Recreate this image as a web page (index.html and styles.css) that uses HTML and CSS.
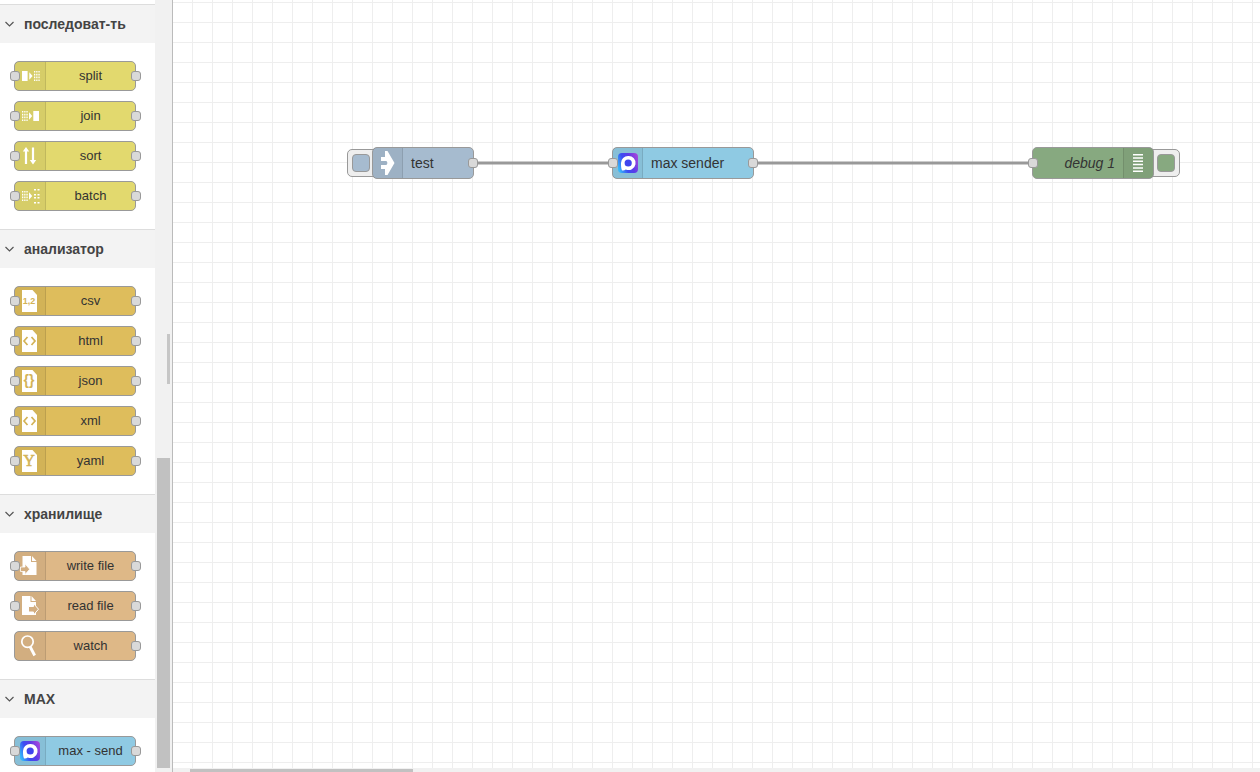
FILE: index.html
```
<!DOCTYPE html>
<html lang="ru">
<head>
    <meta charset="UTF-8">
    <meta name="viewport" content="width=device-width, initial-scale=1.0">
    <title>Flow editor</title>
    <link rel="stylesheet" href="styles.css">
</head>
<body>
    <!-- Shared icons -->
    <svg class="sprites" aria-hidden="true">
        <defs>
            <linearGradient id="max-fill" x1="0" y1="0.7" x2="1" y2="0.3">
                <stop offset="0" stop-color="#35b8fa"/>
                <stop offset="0.35" stop-color="#3b4df2"/>
                <stop offset="0.65" stop-color="#5b3be8"/>
                <stop offset="1" stop-color="#a146dc"/>
            </linearGradient>
        </defs>
        <symbol id="chevron" viewBox="0 0 10 10">
            <path d="M1.5 3L5.5 7L9.5 3" fill="none" stroke="#555" stroke-width="1.2"/>
        </symbol>
        <symbol id="split" viewBox="0 0 20 28">
            <path d="M2 9H7.6V19H2zM9.3 10.3L12.6 14L9.3 17.7z"/>
            <path d="M14 9.8h6M14 12.6h6M14 15.4h6M14 18.2h6" stroke="#fff" stroke-width="1.6" stroke-dasharray="1.3 0.9"/>
        </symbol>
        <symbol id="dots" viewBox="0 0 20 28">
            <path d="M2 9.8h6M2 12.6h6M2 15.4h6M2 18.2h6" stroke="#fff" stroke-width="1.6" stroke-dasharray="1.3 0.9"/>
            <path d="M9 10.3L12.2 14L9 17.7z"/>
        </symbol>
        <symbol id="join" viewBox="0 0 20 28">
            <use href="#dots"/>
            <path d="M13.3 9H19V19H13.3z"/>
        </symbol>
        <symbol id="sort" viewBox="0 0 20 28">
            <path d="M6 5L9.2 9.5H7.1V22H4.9V9.5H2.8zM13 22.5L9.8 18H11.9V5.5H14.1V18H16.2z"/>
        </symbol>
        <symbol id="batch" viewBox="0 0 20 28">
            <use href="#dots"/>
            <path d="M14 7h2v1.5h-2zM17.5 7h2v1.5h-2zM14 12h2v1.5h-2zM17.5 12h2v1.5h-2zM14 15h2v1.5h-2zM17.5 15h2v1.5h-2zM14 20h2v1.5h-2zM17.5 20h2v1.5h-2z"/>
        </symbol>
        <symbol id="page" viewBox="0 0 20 28">
            <path d="M2 3H12.5L17 8V25H2z"/>
        </symbol>
        <symbol id="tags" viewBox="0 0 20 28">
            <path d="M2 3H12.5L17 8V25H2z"/>
            <path d="M7.5 10L4 14L7.5 18M11.5 10L15 14L11.5 18" fill="none" stroke="#d3b357" stroke-width="1.7"/>
        </symbol>
        <symbol id="file-in" viewBox="0 0 20 28">
            <path d="M2.5 4H11V10H16.5V23H2.5zM12 4L16.5 9H12z"/>
            <path d="M0.5 15H5V11.8L9.7 17.2L5 22.6V19.5H0.5z" fill="#d3ae80" stroke="#fff" stroke-width="0.8"/>
        </symbol>
        <symbol id="file-out" viewBox="0 0 20 28">
            <path d="M2 4H10.5V10H16V23H2zM11.5 4L16 9H11.5z"/>
            <path d="M8.5 14.5H13.5V11.5L18.5 17.2L13.5 23V20H8.5z" fill="#d3ae80" stroke="#fff"/>
        </symbol>
        <symbol id="watch" viewBox="0 0 20 28">
            <circle cx="7.5" cy="9.7" r="5.7" fill="none" stroke="#fff" stroke-width="1.7"/>
            <path d="M10 14.5L14.7 23.5" stroke="#fff" stroke-width="2.8"/>
        </symbol>
        <symbol id="max" viewBox="0 0 20 20">
            <rect width="20" height="20" rx="4" fill="url(#max-fill)"/>
            <path d="M10.2 3A7 7 0 1 1 7.8 16.4C6.6 17.2 5 17.8 3.9 17.2C3 15 3 12.5 3 10A7.1 7 0 0 1 10.2 3z"/>
            <circle cx="10.2" cy="10" r="3.6" fill="#3f45ee"/>
        </symbol>
        <symbol id="inject" viewBox="0 0 20 30">
            <path d="M7 3H9.5L16.5 15L9.5 27H7V21H3V17H8.5L9.5 15L8.5 13H3V9H7z"/>
        </symbol>
        <symbol id="debug" viewBox="0 0 20 30">
            <path d="M4 6.7h10M4 10h10M4 13.3h10M4 16.6h10M4 19.9h10M4 23.2h10" stroke="#fff" stroke-width="1.5"/>
        </symbol>
    </svg>

    <aside class="palette">
        <div class="palette-list">
            <!-- Sequence -->
            <section class="category">
                <button class="category-header"><svg class="chevron"><use href="#chevron"/></svg>последоват-ть</button>
                <div class="category-nodes sequence">
                    <div class="palette-node"><i class="port in"></i><span class="icon"><svg><use href="#split"/></svg></span><span class="label">split</span><i class="port out"></i></div>
                    <div class="palette-node"><i class="port in"></i><span class="icon"><svg><use href="#join"/></svg></span><span class="label">join</span><i class="port out"></i></div>
                    <div class="palette-node"><i class="port in"></i><span class="icon"><svg><use href="#sort"/></svg></span><span class="label">sort</span><i class="port out"></i></div>
                    <div class="palette-node"><i class="port in"></i><span class="icon"><svg><use href="#batch"/></svg></span><span class="label">batch</span><i class="port out"></i></div>
                </div>
            </section>

            <!-- Parser -->
            <section class="category">
                <button class="category-header"><svg class="chevron"><use href="#chevron"/></svg>анализатор</button>
                <div class="category-nodes parser">
                    <div class="palette-node"><i class="port in"></i><span class="icon"><svg><use href="#page"/><text class="glyph" x="9" y="17">1,2</text></svg></span><span class="label">csv</span><i class="port out"></i></div>
                    <div class="palette-node"><i class="port in"></i><span class="icon"><svg><use href="#tags"/></svg></span><span class="label">html</span><i class="port out"></i></div>
                    <div class="palette-node"><i class="port in"></i><span class="icon"><svg><use href="#page"/><text class="glyph braces" x="9" y="18">{}</text></svg></span><span class="label">json</span><i class="port out"></i></div>
                    <div class="palette-node"><i class="port in"></i><span class="icon"><svg><use href="#tags"/></svg></span><span class="label">xml</span><i class="port out"></i></div>
                    <div class="palette-node"><i class="port in"></i><span class="icon"><svg><use href="#page"/><text class="glyph letter" x="9" y="19">Y</text></svg></span><span class="label">yaml</span><i class="port out"></i></div>
                </div>
            </section>

            <!-- Storage -->
            <section class="category">
                <button class="category-header"><svg class="chevron"><use href="#chevron"/></svg>хранилище</button>
                <div class="category-nodes storage">
                    <div class="palette-node"><i class="port in"></i><span class="icon"><svg><use href="#file-in"/></svg></span><span class="label">write file</span><i class="port out"></i></div>
                    <div class="palette-node"><i class="port in"></i><span class="icon"><svg><use href="#file-out"/></svg></span><span class="label">read file</span><i class="port out"></i></div>
                    <div class="palette-node"><span class="icon"><svg><use href="#watch"/></svg></span><span class="label">watch</span><i class="port out"></i></div>
                </div>
            </section>

            <!-- MAX -->
            <section class="category">
                <button class="category-header"><svg class="chevron"><use href="#chevron"/></svg>MAX</button>
                <div class="category-nodes messenger">
                    <div class="palette-node"><i class="port in"></i><span class="icon"><svg><use href="#max"/></svg></span><span class="label">max - send</span><i class="port out"></i></div>
                </div>
            </section>
        </div>
        <div class="palette-scroll">
            <div class="palette-thumb"></div>
            <div class="resize-grip"></div>
        </div>
    </aside>

    <main class="workspace">
        <div class="canvas">
            <svg class="wires">
                <path d="M300 163H440M580 163H860"/>
            </svg>

            <button class="node-button inject-button" aria-label="Inject"><span></span></button>
            <div class="node inject-node">
                <span class="icon"><svg><use href="#inject"/></svg></span>
                <span class="label">test</span>
                <i class="port out"></i>
            </div>

            <div class="node max-node">
                <i class="port in"></i>
                <span class="icon"><svg><use href="#max"/></svg></span>
                <span class="label">max sender</span>
                <i class="port out"></i>
            </div>

            <button class="node-button debug-button" aria-label="Debug"><span></span></button>
            <div class="node debug-node">
                <i class="port in"></i>
                <span class="label">debug 1</span>
                <span class="icon"><svg><use href="#debug"/></svg></span>
            </div>
        </div>
        <div class="canvas-scroll"><div class="canvas-thumb"></div></div>
    </main>
</body>
</html>
```
FILE: styles.css
```
* {
    box-sizing: border-box;
}
body {
    display: flex;
    height: 100vh;
    margin: 0;
    overflow: hidden;
    background-color: #fff;
    color: #333;
    font-family: "Liberation Sans", Arial, sans-serif;
    font-size: 14px;
}
button {
    margin: 0;
    padding: 0;
    border: none;
    color: inherit;
    font: inherit;
    cursor: pointer;
}
.sprites {
    position: absolute;
    width: 0;
    height: 0;
}
svg {
    fill: #fff;
}

/* Palette */
.palette {
    display: flex;
    flex: none;
    border-right: 1px solid #bbb;
}
.palette-list {
    width: 155px;
    padding-top: 4px;
    overflow: hidden;
}
.category-header {
    display: flex;
    align-items: center;
    gap: 10px;
    width: 100%;
    height: 39px;
    padding-left: 4px;
    border-top: 1px solid #ddd;
    background-color: #f3f3f3;
    color: #444;
    font-weight: bold;
}
.chevron {
    width: 10px;
    height: 10px;
}
.category-nodes {
    display: flex;
    flex-direction: column;
    gap: 10px;
    padding: 18px 19px 18px 14px;
}
.palette-node {
    position: relative;
    display: flex;
    height: 30px;
    border: 1px solid #999;
    border-radius: 5px;
    font-size: 13px;
    line-height: 27px;
}
.icon {
    display: flex;
    align-items: center;
    justify-content: center;
    width: 31px;
    border-right: 1px solid rgba(0, 0, 0, 0.1);
    background-color: rgba(0, 0, 0, 0.05);
}
.icon svg {
    width: 20px;
    height: 28px;
}
.label {
    flex: 1;
    text-align: center;
}
.sequence .palette-node {
    background-color: #e2d96e;
}
.parser .palette-node {
    background-color: #debd5c;
}
.storage .palette-node {
    background-color: #deb887;
}
.messenger .palette-node,
.max-node {
    background-color: #8fcae3;
}
.glyph {
    fill: #d3b357;
    font-size: 9px;
    font-weight: bold;
    text-anchor: middle;
}
.braces {
    font-size: 14px;
}
.letter {
    font-family: "Liberation Serif", serif;
    font-size: 16px;
    font-weight: normal;
    stroke: #d3b357;
    stroke-width: 0.5;
}
.port {
    position: absolute;
    top: 9px;
    width: 10px;
    height: 10px;
    border: 1px solid #999;
    border-radius: 3px;
    background-color: #d9d9d9;
}
.port.in {
    left: -5px;
}
.port.out {
    right: -6px;
}
.palette-scroll {
    position: relative;
    display: flex;
    flex-direction: column;
    justify-content: flex-end;
    width: 17px;
    padding: 0 2px 4px;
    background-color: #f1f1f1;
}
.palette-thumb {
    height: 40.4%;
    background-color: #c1c1c1;
}
.resize-grip {
    position: absolute;
    top: calc(50% - 52px);
    right: 2px;
    width: 3px;
    height: 50px;
    background-color: #c6c6c6;
}

/* Workspace */
.workspace {
    display: flex;
    flex: 1;
    flex-direction: column;
    min-width: 0;
}
.canvas {
    position: relative;
    flex: 1;
    background-image:
        linear-gradient(#eee 1px, transparent 1px),
        linear-gradient(90deg, #eee 1px, transparent 1px);
    background-position: 19px 2px;
    background-size: 20px 20px;
}
.wires {
    position: absolute;
    width: 100%;
    height: 100%;
}
.wires path {
    stroke: #999;
    stroke-width: 3;
}
.node {
    position: absolute;
    top: 147px;
    display: flex;
    height: 32px;
    border: 1px solid #999;
    border-radius: 5px;
    line-height: 30px;
}
.node .icon {
    width: 30px;
}
.node .icon svg {
    height: 30px;
}
.node .label {
    padding-left: 8px;
    text-align: left;
}
.node .port {
    top: 10px;
}
.node .port.out {
    right: -5px;
}
.inject-node {
    left: 199px;
    width: 102px;
    background-color: #a6bbcf;
}
.max-node {
    left: 439px;
    width: 142px;
}
.debug-node {
    left: 859px;
    width: 122px;
    background-color: #87a980;
}
.debug-node .label {
    padding: 0 8px 0 0;
    font-style: italic;
    text-align: right;
}
.debug-node .icon {
    border-right: none;
    border-left: 1px solid rgba(0, 0, 0, 0.1);
}
.node-button {
    position: absolute;
    top: 149px;
    display: flex;
    width: 34px;
    height: 28px;
    padding: 4px;
    border: 1px solid #999;
    border-radius: 5px;
    background-color: #eee;
}
.node-button span {
    width: 18px;
    height: 18px;
    border: 1px solid #999;
    border-radius: 4px;
}
.inject-button {
    left: 174px;
}
.inject-button span {
    background-color: #a6bbcf;
}
.debug-button {
    left: 973px;
    justify-content: flex-end;
}
.debug-button span {
    background-color: #87a980;
}
.canvas-scroll {
    height: 4px;
    padding: 1px 17px 0;
    background-color: #f1f1f1;
}
.canvas-thumb {
    width: 21.2%;
    height: 3px;
    background-color: #c1c1c1;
}
```
